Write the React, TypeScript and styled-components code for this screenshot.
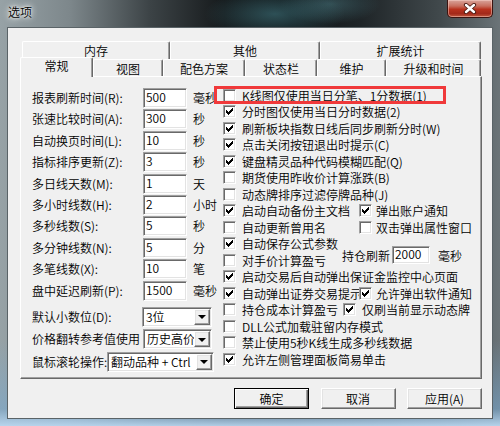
import React from "react";
import styled, { createGlobalStyle, css } from "styled-components";

const GlobalStyle = createGlobalStyle`
  html, body { margin: 0; padding: 0; background: #000; }
  body {
    font-family: "Noto Sans CJK SC", "Noto Sans", sans-serif;
    font-size: 12px;
    font-weight: 350;
    color: #000;
  }
  * { box-sizing: border-box; }
`;

const Window = styled.div`
  width: 500px;
  height: 426px;
  padding: 0 7px 7px;
  display: flex;
  flex-direction: column;
  background:
    linear-gradient(180deg, rgba(0,0,0,0) 0%, rgba(0,0,0,0) 80%, rgba(120,170,210,0.55) 96%, rgba(185,215,240,0.95) 100%),
    radial-gradient(ellipse 70px 26px at 275px 14px, rgba(70,130,140,0.55), rgba(0,0,0,0)),
    radial-gradient(ellipse 50px 20px at 330px 4px, rgba(90,150,160,0.4), rgba(0,0,0,0)),
    linear-gradient(90deg, #97a2a6 0%, #7d878b 14%, #3c4346 30%, #15191b 45%, #0e1113 58%, #1e2427 72%, #41494c 88%, #6b7478 100%);
`;

const TitleBar = styled.div`
  height: 27px;
  display: flex;
  align-items: flex-start;
  justify-content: space-between;
  flex: none;
`;

const Title = styled.div`
  margin: 3px 0 0 1px;
  line-height: 18px;
  font-size: 12px;
  color: #000;
  text-shadow: 0 0 3px #fff, 0 0 6px rgba(255,255,255,0.9), 0 0 9px rgba(255,255,255,0.7);
`;

const CloseButton = styled.div`
  width: 46px;
  height: 18px;
  border: 1px solid #3b1410;
  border-top: none;
  border-radius: 0 0 5px 5px;
  background: linear-gradient(180deg, #d9a59b 0%, #c8705f 35%, #b8321d 55%, #a3291a 80%, #c0583e 100%);
  box-shadow: inset 0 0 0 1px rgba(255,220,210,0.45);
  display: flex;
  align-items: center;
  justify-content: center;
`;

const Client = styled.div`
  flex: 1;
  border: 1px solid #5a6367;
  background: #f0f0f0;
  padding: 13px 10px 0 12px;
  display: flex;
  flex-direction: column;
`;

const TabRow = styled.div<{ $back?: boolean }>`
  display: flex;
  height: ${(p) => (p.$back ? "18px" : "17px")};
  margin-left: ${(p) => (p.$back ? "2px" : "0")};
  flex: none;
`;

const Tab = styled.div<{ $w: number; $active?: boolean }>`
  width: ${(p) => p.$w}px;
  flex: none;
  height: 100%;
  background: #f0f0f0;
  border-top: 1px solid #fff;
  border-left: 1px solid #fff;
  border-right: 1px solid #696969;
  border-radius: 2px 2px 0 0;
  box-shadow: inset -1px 0 0 #a0a0a0;
  display: flex;
  align-items: center;
  justify-content: center;
  white-space: nowrap;
  ${(p) =>
    p.$active &&
    css`
      position: relative;
      z-index: 1;
      height: 20px;
      margin-top: -2px;
      padding-bottom: 5px;
      align-self: flex-start;
    `}
`;

const Panel = styled.div`
  width: 462px;
  height: 303px;
  flex: none;
  border: 1px solid;
  border-color: #fff #696969 #696969 #fff;
  box-shadow: inset -1px -1px 0 #a0a0a0;
  display: flex;
`;

const LeftCol = styled.div`
  width: 194px;
  flex: none;
  padding: 11px 0 0 11px;
  display: flex;
  flex-direction: column;
`;

const FieldRow = styled.div`
  height: 21.4px;
  display: flex;
  align-items: flex-start;
  white-space: nowrap;
`;

const FieldLabel = styled.div<{ $w?: number }>`
  width: ${(p) => (p.$w ? `${p.$w}px` : "auto")};
  flex: none;
  height: 20px;
  line-height: 20px;
  white-space: nowrap;
`;

const sunken = css`
  border: 1px solid;
  border-color: #a0a0a0 #fff #fff #a0a0a0;
  box-shadow: inset 1px 1px 0 #696969, inset -1px -1px 0 #e3e3e3;
  background: #fff;
`;

const raised = css`
  border: 1px solid;
  border-color: #fff #696969 #696969 #fff;
  box-shadow: inset -1px -1px 0 #a0a0a0, inset 1px 1px 0 #e3e3e3;
  background: #f0f0f0;
`;

const TextBox = styled.input<{ $w: number; $h?: number }>`
  ${sunken};
  width: ${(p) => p.$w}px;
  height: ${(p) => p.$h ?? 20}px;
  flex: none;
  padding: 0 0 3px 2px;
  margin: 0;
  font-family: inherit;
  font-size: 12px;
  font-weight: inherit;
  color: #000;
  outline: none;
`;

const Unit = styled.div`
  margin-left: 6px;
  height: 20px;
  line-height: 20px;
`;

const ComboGroup = styled.div`
  margin-top: 5px;
  display: flex;
  flex-direction: column;
  gap: 2.5px;
`;

const ComboRow = styled.div`
  height: 20px;
  display: flex;
  align-items: center;
  white-space: nowrap;
`;

const Combo = styled.div<{ $w: number }>`
  ${sunken};
  width: ${(p) => p.$w}px;
  height: 20px;
  flex: none;
  display: flex;
  align-items: center;
  padding: 1px 1px 1px 2px;
  overflow: hidden;
`;

const ComboText = styled.div`
  flex: 1;
  overflow: hidden;
  white-space: nowrap;
  line-height: 16px;
  padding-left: 1px;
`;

const DropButton = styled.div`
  ${raised};
  width: 16px;
  height: 16px;
  flex: none;
  display: flex;
  align-items: center;
  justify-content: center;
`;

const Arrow = styled.span`
  width: 0;
  height: 0;
  border-left: 4px solid transparent;
  border-right: 4px solid transparent;
  border-top: 4px solid #000;
  margin-top: 1px;
`;

const RightCol = styled.div`
  flex: 1;
  padding: 10px 0 0 8px;
  display: flex;
  flex-direction: column;
`;

const CheckRow = styled.div`
  position: relative;
  height: 16.5px;
  display: flex;
  align-items: center;
  white-space: nowrap;
`;

const CheckItem = styled.div<{ $w?: number; $gap?: number }>`
  width: ${(p) => (p.$w ? `${p.$w}px` : "auto")};
  flex: none;
  display: flex;
  align-items: center;
  gap: ${(p) => p.$gap ?? 6}px;
  white-space: nowrap;
`;

const Box = styled.span`
  position: relative;
  width: 13px;
  height: 13px;
  flex: none;
  border: 1px solid;
  border-color: #a0a0a0 #fff #fff #a0a0a0;
  box-shadow: inset 1px 1px 0 #696969, inset -1px -1px 0 #e3e3e3;
  background: #fff;
  display: flex;
  align-items: center;
  justify-content: center;
`;

const RedMark = styled.div`
  position: absolute;
  left: -9px;
  top: -1px;
  width: 232px;
  height: 18px;
  border: 3px solid #f0393a;
  pointer-events: none;
`;

const HoldGroup = styled.div`
  display: flex;
  align-items: center;
  align-self: flex-start;
  margin-top: -6px;
  height: 18px;
`;

const HoldLabel = styled.span`
  margin-right: 2px;
`;

const HoldUnit = styled.span`
  margin-left: 8px;
`;

const ButtonBar = styled.div`
  display: flex;
  justify-content: flex-end;
  gap: 11.5px;
  margin-top: 9px;
`;

const Button = styled.div<{ $default?: boolean }>`
  width: 75px;
  height: 21px;
  display: flex;
  align-items: center;
  justify-content: center;
  ${(p) =>
    p.$default
      ? css`
          border: 1px solid #000;
          background: #f0f0f0;
          box-shadow: inset 1px 1px 0 #fff, inset -1px -1px 0 #696969, inset -2px -2px 0 #a0a0a0;
        `
      : raised}
`;

const CHECK = [
  "......#",
  ".....##",
  "#...###",
  "##.###.",
  "#####..",
  ".###...",
  "..#....",
];

function CheckMark() {
  const rects: React.ReactNode[] = [];
  CHECK.forEach((row, y) =>
    row.split("").forEach((c, x) => {
      if (c === "#") rects.push(<rect key={`${x}-${y}`} x={x} y={y} width={1} height={1} fill="#000" />);
    })
  );
  return (
    <svg width="7" height="7" viewBox="0 0 7 7" shapeRendering="crispEdges">
      {rects}
    </svg>
  );
}

function Check({ on, label, w, gap }: { on?: boolean; label?: string; w?: number; gap?: number }) {
  return (
    <CheckItem $w={w} $gap={gap}>
      <Box>{on && <CheckMark />}</Box>
      {label && <span>{label}</span>}
    </CheckItem>
  );
}

function CloseX() {
  return (
    <svg width="14" height="11" viewBox="0 0 14 11">
      <path d="M3 2 L11 9 M11 2 L3 9" stroke="#4a1a12" strokeWidth="4.2" strokeLinecap="round" />
      <path d="M3 2 L11 9 M11 2 L3 9" stroke="#fff" strokeWidth="2.4" strokeLinecap="round" />
    </svg>
  );
}

const fields: [string, string, string][] = [
  ["报表刷新时间(R):", "500", "毫秒"],
  ["张速比较时间(A):", "300", "秒"],
  ["自动换页时间(L):", "10", "秒"],
  ["指标排序更新(Z):", "3", "秒"],
  ["多日线天数(M):", "1", "天"],
  ["多小时线数(H):", "2", "小时"],
  ["多秒线数(S):", "5", "秒"],
  ["多分钟线数(N):", "5", "分"],
  ["多笔线数(X):", "10", "笔"],
  ["盘中延迟刷新(P):", "1500", "毫秒"],
];

export default function App() {
  return (
    <>
      <GlobalStyle />
      <Window>
        <TitleBar>
          <Title>选项</Title>
          <CloseButton>
            <CloseX />
          </CloseButton>
        </TitleBar>
        <Client>
          <TabRow $back>
            <Tab $w={148}>内存</Tab>
            <Tab $w={150}>其他</Tab>
            <Tab $w={161}>扩展统计</Tab>
          </TabRow>
          <TabRow>
            <Tab $w={73} $active>常规</Tab>
            <Tab $w={70}>视图</Tab>
            <Tab $w={82}>配色方案</Tab>
            <Tab $w={72}>状态栏</Tab>
            <Tab $w={69}>维护</Tab>
            <Tab $w={95}>升级和时间</Tab>
          </TabRow>
          <Panel>
            <LeftCol>
              {fields.map(([label, value, unit]) => (
                <FieldRow key={label}>
                  <FieldLabel $w={111}>{label}</FieldLabel>
                  <TextBox $w={44} defaultValue={value} readOnly />
                  <Unit>{unit}</Unit>
                </FieldRow>
              ))}
              <ComboGroup>
                <ComboRow>
                  <FieldLabel $w={110}>默认小数位(D):</FieldLabel>
                  <Combo $w={70}>
                    <ComboText>3位</ComboText>
                    <DropButton><Arrow /></DropButton>
                  </Combo>
                </ComboRow>
                <ComboRow>
                  <FieldLabel $w={111}>价格翻转参考值使用</FieldLabel>
                  <Combo $w={69}>
                    <ComboText>历史高价</ComboText>
                    <DropButton><Arrow /></DropButton>
                  </Combo>
                </ComboRow>
                <ComboRow>
                  <FieldLabel $w={75}>鼠标滚轮操作:</FieldLabel>
                  <Combo $w={107}>
                    <ComboText>翻动品种 + Ctrl</ComboText>
                    <DropButton><Arrow /></DropButton>
                  </Combo>
                </ComboRow>
              </ComboGroup>
            </LeftCol>
            <RightCol>
              <CheckRow>
                <Check label="K线图仅使用当日分笔、1分数据(1)" />
                <RedMark />
              </CheckRow>
              <CheckRow><Check on label="分时图仅使用当日分时数据(2)" /></CheckRow>
              <CheckRow><Check on label="刷新板块指数日线后同步刷新分时(W)" /></CheckRow>
              <CheckRow><Check on label="点击关闭按钮退出时提示(C)" /></CheckRow>
              <CheckRow><Check on label="键盘精灵品种代码模糊匹配(Q)" /></CheckRow>
              <CheckRow><Check label="期货使用昨收价计算涨跌(B)" /></CheckRow>
              <CheckRow><Check label="动态牌排序过滤停牌品种(J)" /></CheckRow>
              <CheckRow>
                <Check on label="启动自动备份主文档" w={136} />
                <Check on label="弹出账户通知" gap={4} />
              </CheckRow>
              <CheckRow>
                <Check label="自动更新曾用名" w={136} />
                <Check label="双击弹出属性窗口" gap={4} />
              </CheckRow>
              <CheckRow><Check on label="自动保存公式参数" /></CheckRow>
              <CheckRow>
                <Check label="对手价计算盈亏" w={119} />
                <HoldGroup>
                  <HoldLabel>持仓刷新</HoldLabel>
                  <TextBox $w={38} $h={18} defaultValue="2000" readOnly />
                  <HoldUnit>毫秒</HoldUnit>
                </HoldGroup>
              </CheckRow>
              <CheckRow><Check on label="启动交易后自动弹出保证金监控中心页面" /></CheckRow>
              <CheckRow>
                <Check on label="自动弹出证券交易提示" w={136} />
                <Check on label="允许弹出软件通知" gap={4} />
              </CheckRow>
              <CheckRow>
                <Check label="持仓成本计算盈亏" w={120} />
                <Check on label="仅刷当前显示动态牌" gap={6} />
              </CheckRow>
              <CheckRow><Check label="DLL公式加载驻留内存模式" /></CheckRow>
              <CheckRow><Check label="禁止使用5秒K线生成多秒线数据" /></CheckRow>
              <CheckRow><Check on label="允许左侧管理面板简易单击" /></CheckRow>
            </RightCol>
          </Panel>
          <ButtonBar>
            <Button $default>确定</Button>
            <Button>取消</Button>
            <Button>应用(A)</Button>
          </ButtonBar>
        </Client>
      </Window>
    </>
  );
}
